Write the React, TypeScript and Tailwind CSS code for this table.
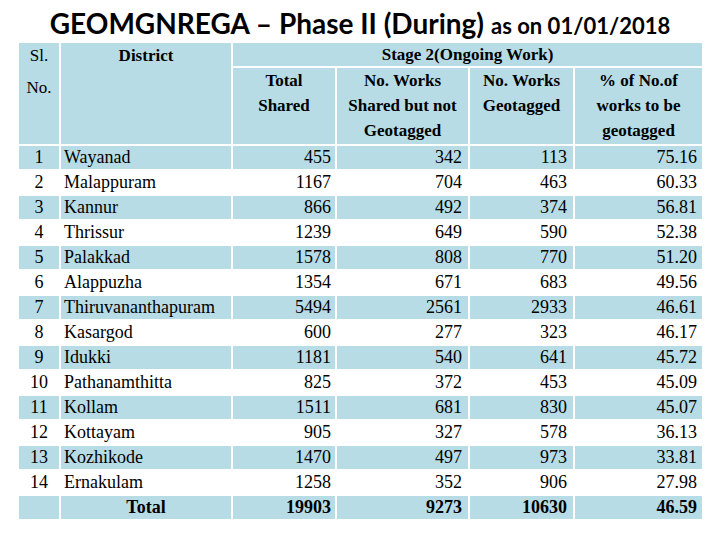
const rows = [
  ["1", "Wayanad", "455", "342", "113", "75.16"],
  ["2", "Malappuram", "1167", "704", "463", "60.33"],
  ["3", "Kannur", "866", "492", "374", "56.81"],
  ["4", "Thrissur", "1239", "649", "590", "52.38"],
  ["5", "Palakkad", "1578", "808", "770", "51.20"],
  ["6", "Alappuzha", "1354", "671", "683", "49.56"],
  ["7", "Thiruvananthapuram", "5494", "2561", "2933", "46.61"],
  ["8", "Kasargod", "600", "277", "323", "46.17"],
  ["9", "Idukki", "1181", "540", "641", "45.72"],
  ["10", "Pathanamthitta", "825", "372", "453", "45.09"],
  ["11", "Kollam", "1511", "681", "830", "45.07"],
  ["12", "Kottayam", "905", "327", "578", "36.13"],
  ["13", "Kozhikode", "1470", "497", "973", "33.81"],
  ["14", "Ernakulam", "1258", "352", "906", "27.98"],
];

function DataRow({ row, shaded }: { row: string[]; shaded: boolean }) {
  const bg = shaded ? "bg-[#b7dce6]" : "bg-white";
  return (
    <>
      <div className={`${bg} text-center`}>{row[0]}</div>
      <div className={`${bg} pl-[3px]`}>{row[1]}</div>
      <div className={`${bg} text-right pr-[4px]`}>{row[2]}</div>
      <div className={`${bg} text-right pr-[6px]`}>{row[3]}</div>
      <div className={`${bg} text-right pr-[6px]`}>{row[4]}</div>
      <div className={`${bg} text-right pr-[5px]`}>{row[5]}</div>
    </>
  );
}

export default function App() {
  return (
    <div className="w-[720px] h-[540px] bg-white text-black overflow-hidden">
      <div className="h-[43px] pt-[9px] flex justify-center items-baseline [font-family:Lato,sans-serif] font-bold leading-[29px]">
        <span className="text-[28px]">GEOMGNREGA – Phase II (During)</span>
        <span className="text-[22px] ml-[7px]">as on 01/01/2018</span>
      </div>
      <div className="pl-[19px] [font-family:Liberation_Serif,serif]">
        <div className="grid grid-cols-[40px_170px_102px_131px_103px_127px] grid-rows-[23px_76px] auto-rows-[23px] gap-[2px] text-[18px] leading-[23px]">
          <div className="row-span-2 bg-[#b7dce6] text-center text-[17px] leading-[25px]">
            <div>Sl.</div>
            <div className="mt-[7px]">No.</div>
          </div>
          <div className="row-span-2 bg-[#b7dce6] text-center font-bold text-[17px] leading-[25px]">
            District
          </div>
          <div className="col-span-4 bg-[#b7dce6] text-center font-bold text-[17px] leading-[23px]">
            Stage 2(Ongoing Work)
          </div>
          <div className="bg-[#b7dce6] text-center font-bold text-[17px] leading-[25px]">
            Total
            <br />
            Shared
          </div>
          <div className="bg-[#b7dce6] text-center font-bold text-[17px] leading-[25px]">
            No. Works
            <br />
            Shared but not
            <br />
            Geotagged
          </div>
          <div className="bg-[#b7dce6] text-center font-bold text-[17px] leading-[25px]">
            No. Works
            <br />
            Geotagged
          </div>
          <div className="bg-[#b7dce6] text-center font-bold text-[17px] leading-[25px]">
            % of No.of
            <br />
            works to be
            <br />
            geotagged
          </div>
          {rows.map((r, i) => (
            <DataRow key={r[0]} row={r} shaded={i % 2 === 0} />
          ))}
          <div className="bg-[#b7dce6]" />
          <div className="bg-[#b7dce6] text-center font-bold">Total</div>
          <div className="bg-[#b7dce6] text-right pr-[4px] font-bold">19903</div>
          <div className="bg-[#b7dce6] text-right pr-[6px] font-bold">9273</div>
          <div className="bg-[#b7dce6] text-right pr-[6px] font-bold">10630</div>
          <div className="bg-[#b7dce6] text-right pr-[5px] font-bold">46.59</div>
        </div>
      </div>
    </div>
  );
}
